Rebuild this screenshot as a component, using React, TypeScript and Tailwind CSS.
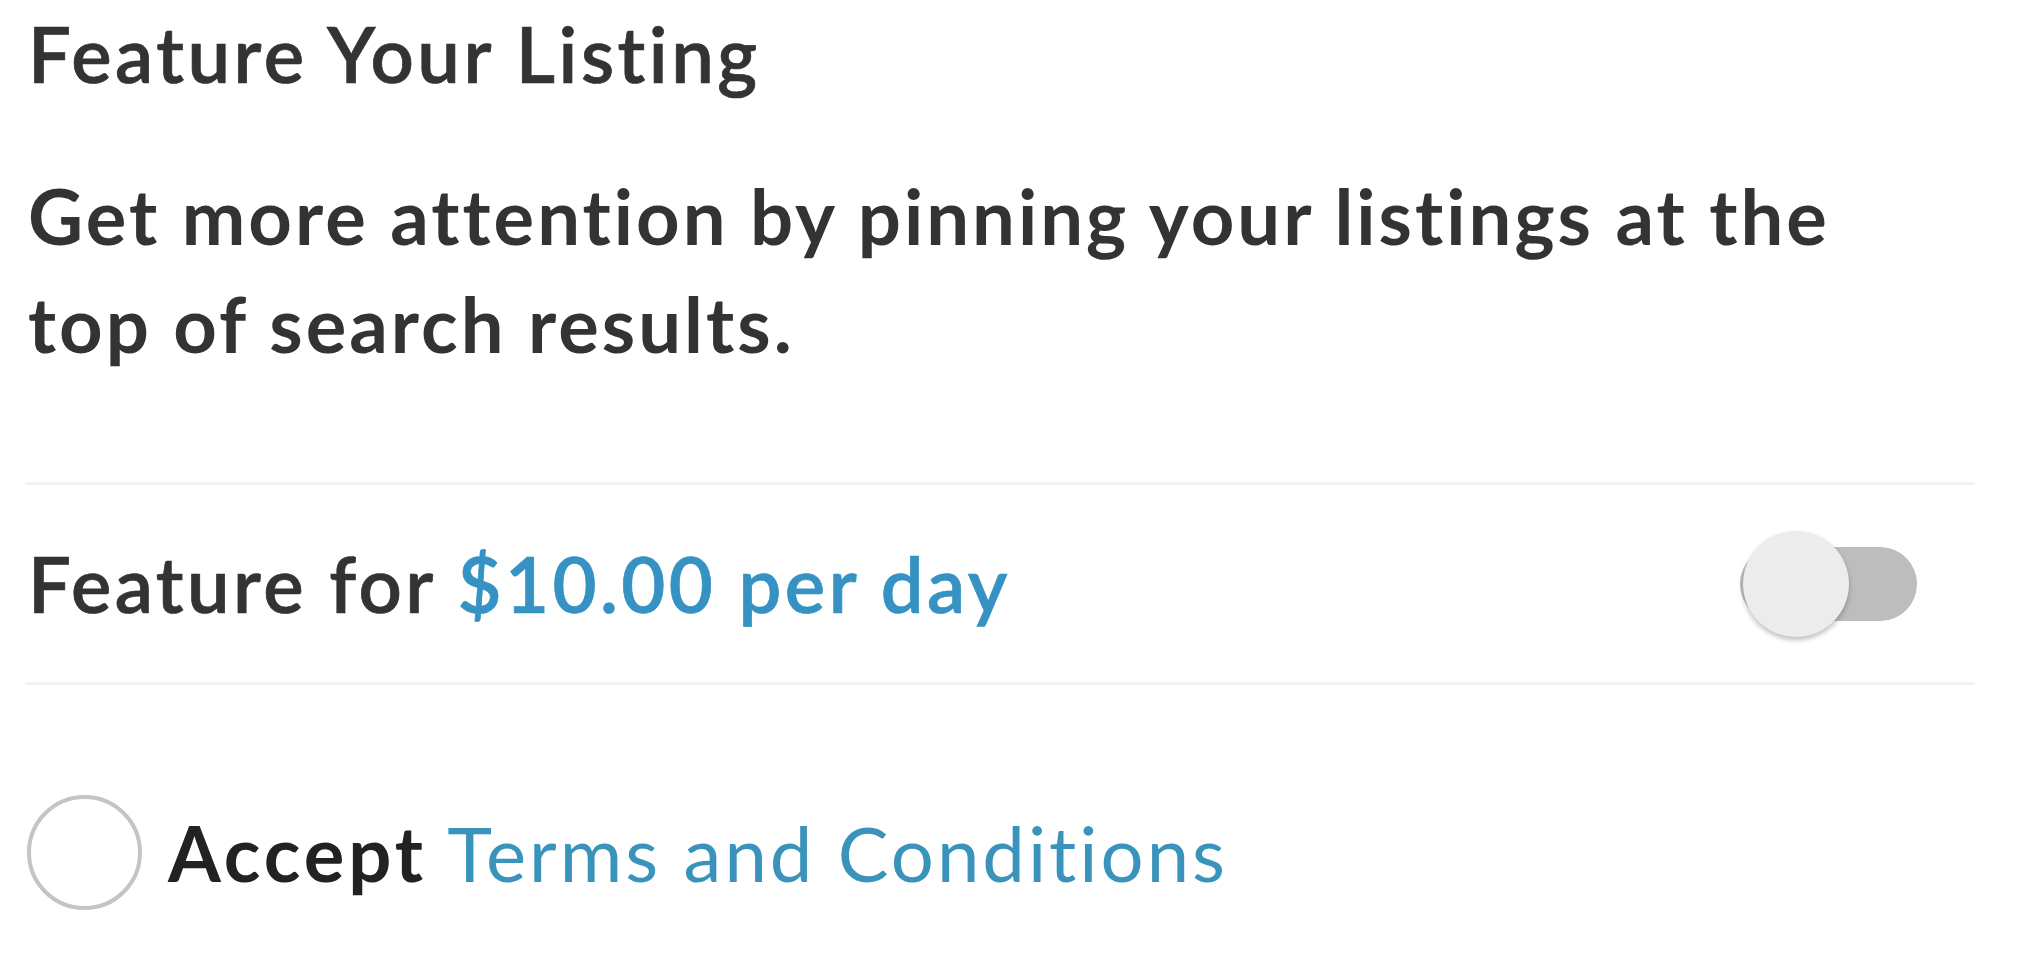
import { useState } from "react";

// Feature listing settings panel (mobile screen, scaled up)
export default function App() {
  const [featured, setFeatured] = useState(false);
  const [accepted, setAccepted] = useState(false);

  return (
    <div className="min-h-[978px] w-full bg-white pl-[25px] pr-[61px] font-['Lato',sans-serif] text-[#333333] tracking-[3px] [font-variant-ligatures:none]">
      {/* Header */}
      <h1 className="pt-2 pl-[3px] text-[76px] leading-[92px] font-semibold tracking-[3.5px] [-webkit-text-stroke:0.7px_currentColor]">
        Feature Your Listing
      </h1>

      <p className="mt-[62px] pl-[3px] text-[76px] leading-[108px] font-bold">
        Get more attention by pinning your listings at the
        <br />
        top of search results.
      </p>

      {/* Feature toggle row */}
      <div className="mt-[104px] flex h-[203px] items-center justify-between border-y-[3px] border-[#f3f3f3]">
        <span className="pl-[3px] text-[76px] leading-none font-semibold tracking-[3.4px] [-webkit-text-stroke:0.7px_currentColor]">
          Feature for <span className="text-[#3592c2]">$10.00 per day</span>
        </span>

        <button
          type="button"
          onClick={() => setFeatured((v) => !v)}
          className="relative mr-[58px] h-[74px] w-[177px] rounded-full bg-[#bdbdbd]"
        >
          <span
            className={
              featured
                ? "absolute top-1/2 right-[-3px] h-[106px] w-[106px] -translate-y-1/2 rounded-full bg-[#3592c2] shadow-[0_3px_5px_rgba(0,0,0,0.25)]"
                : "absolute top-1/2 left-[3px] h-[106px] w-[106px] -translate-y-1/2 rounded-full bg-[#ececec] shadow-[0_3px_5px_rgba(0,0,0,0.25)]"
            }
          />
        </button>
      </div>

      {/* Terms */}
      <div className="mt-[110px] flex h-[115px] items-center gap-[26px] pl-[2px]">
        <button
          type="button"
          onClick={() => setAccepted((v) => !v)}
          className="flex h-[115px] w-[115px] shrink-0 items-center justify-center rounded-full border-[4px] border-[#c4c4c4]"
        >
          {accepted && <span className="h-[70px] w-[70px] rounded-full bg-[#3592c2]" />}
        </button>
        <span className="text-[76px] leading-none">
          <span className="font-bold tracking-[4px] text-[#222222]">Accept</span>{" "}
          <span className="font-normal text-[#3a93bb]">Terms and Conditions</span>
        </span>
      </div>
    </div>
  );
}
